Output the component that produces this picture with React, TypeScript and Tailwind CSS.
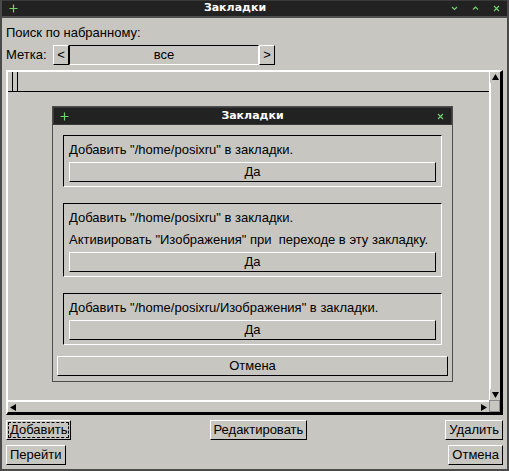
import React from "react";

const RAISED = "border border-t-white border-l-white border-r-black border-b-black";
const GROOVE = "border border-t-black border-l-black border-r-white border-b-white";

function TitleGlyph({ kind }: { kind: "plus" | "down" | "up" | "close" }) {
  return (
    <svg width="9" height="9" viewBox="0 0 9 9" className="block">
      {kind === "plus" && <path d="M4.5 0.5V8.5M0.5 4.5H8.5" stroke="#6fd66f" strokeWidth="1.2" />}
      {kind === "down" && <path d="M2 3L4.5 5.5L7 3" stroke="#6fd66f" strokeWidth="1.1" fill="none" />}
      {kind === "up" && <path d="M2 5.5L4.5 3L7 5.5" stroke="#6fd66f" strokeWidth="1.1" fill="none" />}
      {kind === "close" && <path d="M2 2L7 7M7 2L2 7" stroke="#6fd66f" strokeWidth="1.1" />}
    </svg>
  );
}

function Arrow({ dir }: { dir: "up" | "down" | "left" | "right" }) {
  const d = {
    up: "M1 7L4.5 1L8 7Z",
    down: "M1 2L4.5 8L8 2Z",
    left: "M7 1L1 4.5L7 8Z",
    right: "M2 1L8 4.5L2 8Z",
  }[dir];
  return (
    <svg width="9" height="9" viewBox="0 0 9 9" className="block">
      <path d={d} fill="#000" />
    </svg>
  );
}

function Group({ lines }: { lines: string[] }) {
  return (
    <div className={`${GROOVE} pt-[3px] pb-[4px] px-[5px]`}>
      {lines.map((l) => (
        <div key={l} className="h-[22px] leading-[22px] whitespace-pre">
          {l}
        </div>
      ))}
      <button className={`${RAISED} mt-[1px] h-[20px] w-full leading-[18px] text-center`}>Да</button>
    </div>
  );
}

export default function App() {
  return (
    <div className="relative w-[509px] h-[471px] bg-[#c7c6c1] border-x-2 border-b-2 border-[#4a4a4a] flex flex-col font-['Liberation_Sans',Arial,sans-serif] text-[13px] text-black overflow-hidden">
      {/* main title bar */}
      <div className="h-[18px] shrink-0 bg-[#222222] border-t border-t-[#3a3a3a] border-b-2 border-b-[#505050] flex items-center px-[6px] -mx-[2px]">
        <div className="w-[14px] flex justify-center">
          <TitleGlyph kind="plus" />
        </div>
        <div className="flex-1 text-center text-white font-bold text-[11px] font-['DejaVu_Sans',sans-serif]">
          Закладки
        </div>
        <div className="flex gap-[12px] pr-[2px]">
          <TitleGlyph kind="down" />
          <TitleGlyph kind="up" />
          <TitleGlyph kind="close" />
        </div>
      </div>

      <div className="flex flex-col px-[4px]">
        <div className="mt-[4px] h-[22px] leading-[22px]">Поиск по набранному:</div>

        <div className="mt-[1px] h-[20px] flex items-center">
          <span className="w-[47px]">Метка:</span>
          <button className={`${RAISED} w-[16px] h-[20px] leading-[18px] text-center`}>&lt;</button>
          <div className={`${GROOVE} w-[190px] h-[20px] leading-[18px] text-center`}>все</div>
          <button className={`${RAISED} w-[16px] h-[20px] leading-[18px] text-center`}>&gt;</button>
        </div>

        {/* canvas with scrollbars */}
        <div className="mt-[5px] h-[345px] flex flex-col border-t-2 border-l-2 border-white border-r-[3px] border-b-[3px] border-r-black border-b-black">
          <div className="flex-1 flex min-h-0">
            <div className="flex-1 flex flex-col">
              <div className="h-[20px] border-b border-black flex">
                <div className="ml-[4px] w-[6px] h-full border-x border-black" />
              </div>
              <div className="flex-1" />
            </div>
            <div className="w-[11px] flex flex-col border-l border-white">
              <div className="h-[11px] flex items-center justify-center">
                <Arrow dir="up" />
              </div>
              <div className="flex-1 border-l border-white" />
              <div className="h-[11px] flex items-center justify-center">
                <Arrow dir="down" />
              </div>
            </div>
          </div>
          <div className="h-[12px] flex">
            <div className="flex-1 flex border-t-2 border-white">
              <div className="w-[11px] flex items-center justify-center">
                <Arrow dir="left" />
              </div>
              <div className="flex-1" />
              <div className="w-[12px] flex items-center justify-center">
                <Arrow dir="right" />
              </div>
            </div>
            <div className="w-[11px] border border-[#8a8a8a]" />
          </div>
        </div>

        <div className="mt-[5px] flex justify-between items-start">
          <button className={`${RAISED} h-[20px] px-[1px] py-[1px]`}>
            <span className="block h-full px-[1px] border border-dashed border-black leading-[14px]">Добавить</span>
          </button>
          <button className={`${RAISED} h-[20px] px-[3px] leading-[18px]`}>Редактировать</button>
          <button className={`${RAISED} h-[20px] px-[3px] leading-[18px]`}>Удалить</button>
        </div>
        <div className="mt-[5px] flex justify-between">
          <button className={`${RAISED} h-[20px] px-[3px] leading-[18px]`}>Перейти</button>
          <button className={`${RAISED} h-[20px] px-[3px] leading-[18px]`}>Отмена</button>
        </div>
      </div>

      {/* dialog window over the canvas */}
      <div className="absolute left-[50px] top-[106px] w-[401px] flex flex-col border border-[#4d4d4d] bg-[#c7c6c1]">
        <div className="h-[18px] bg-[#222222] border border-[#3a3a3a] flex items-center px-[6px]">
          <TitleGlyph kind="plus" />
          <div className="flex-1 text-center text-white font-bold text-[11px] font-['DejaVu_Sans',sans-serif]">Закладки</div>
          <TitleGlyph kind="close" />
        </div>
        <div className="px-[10px] pt-[10px] flex flex-col gap-[16px]">
          <Group lines={['Добавить "/home/posixru" в закладки.']} />
          <Group
            lines={['Добавить "/home/posixru" в закладки.', 'Активировать "Изображения" при  переходе в эту закладку.']}
          />
          <Group lines={['Добавить "/home/posixru/Изображения" в закладки.']} />
        </div>
        <button className={`${RAISED} mx-[4px] mt-[11px] mb-[5px] h-[20px] leading-[18px] text-center`}>Отмена</button>
      </div>
    </div>
  );
}
